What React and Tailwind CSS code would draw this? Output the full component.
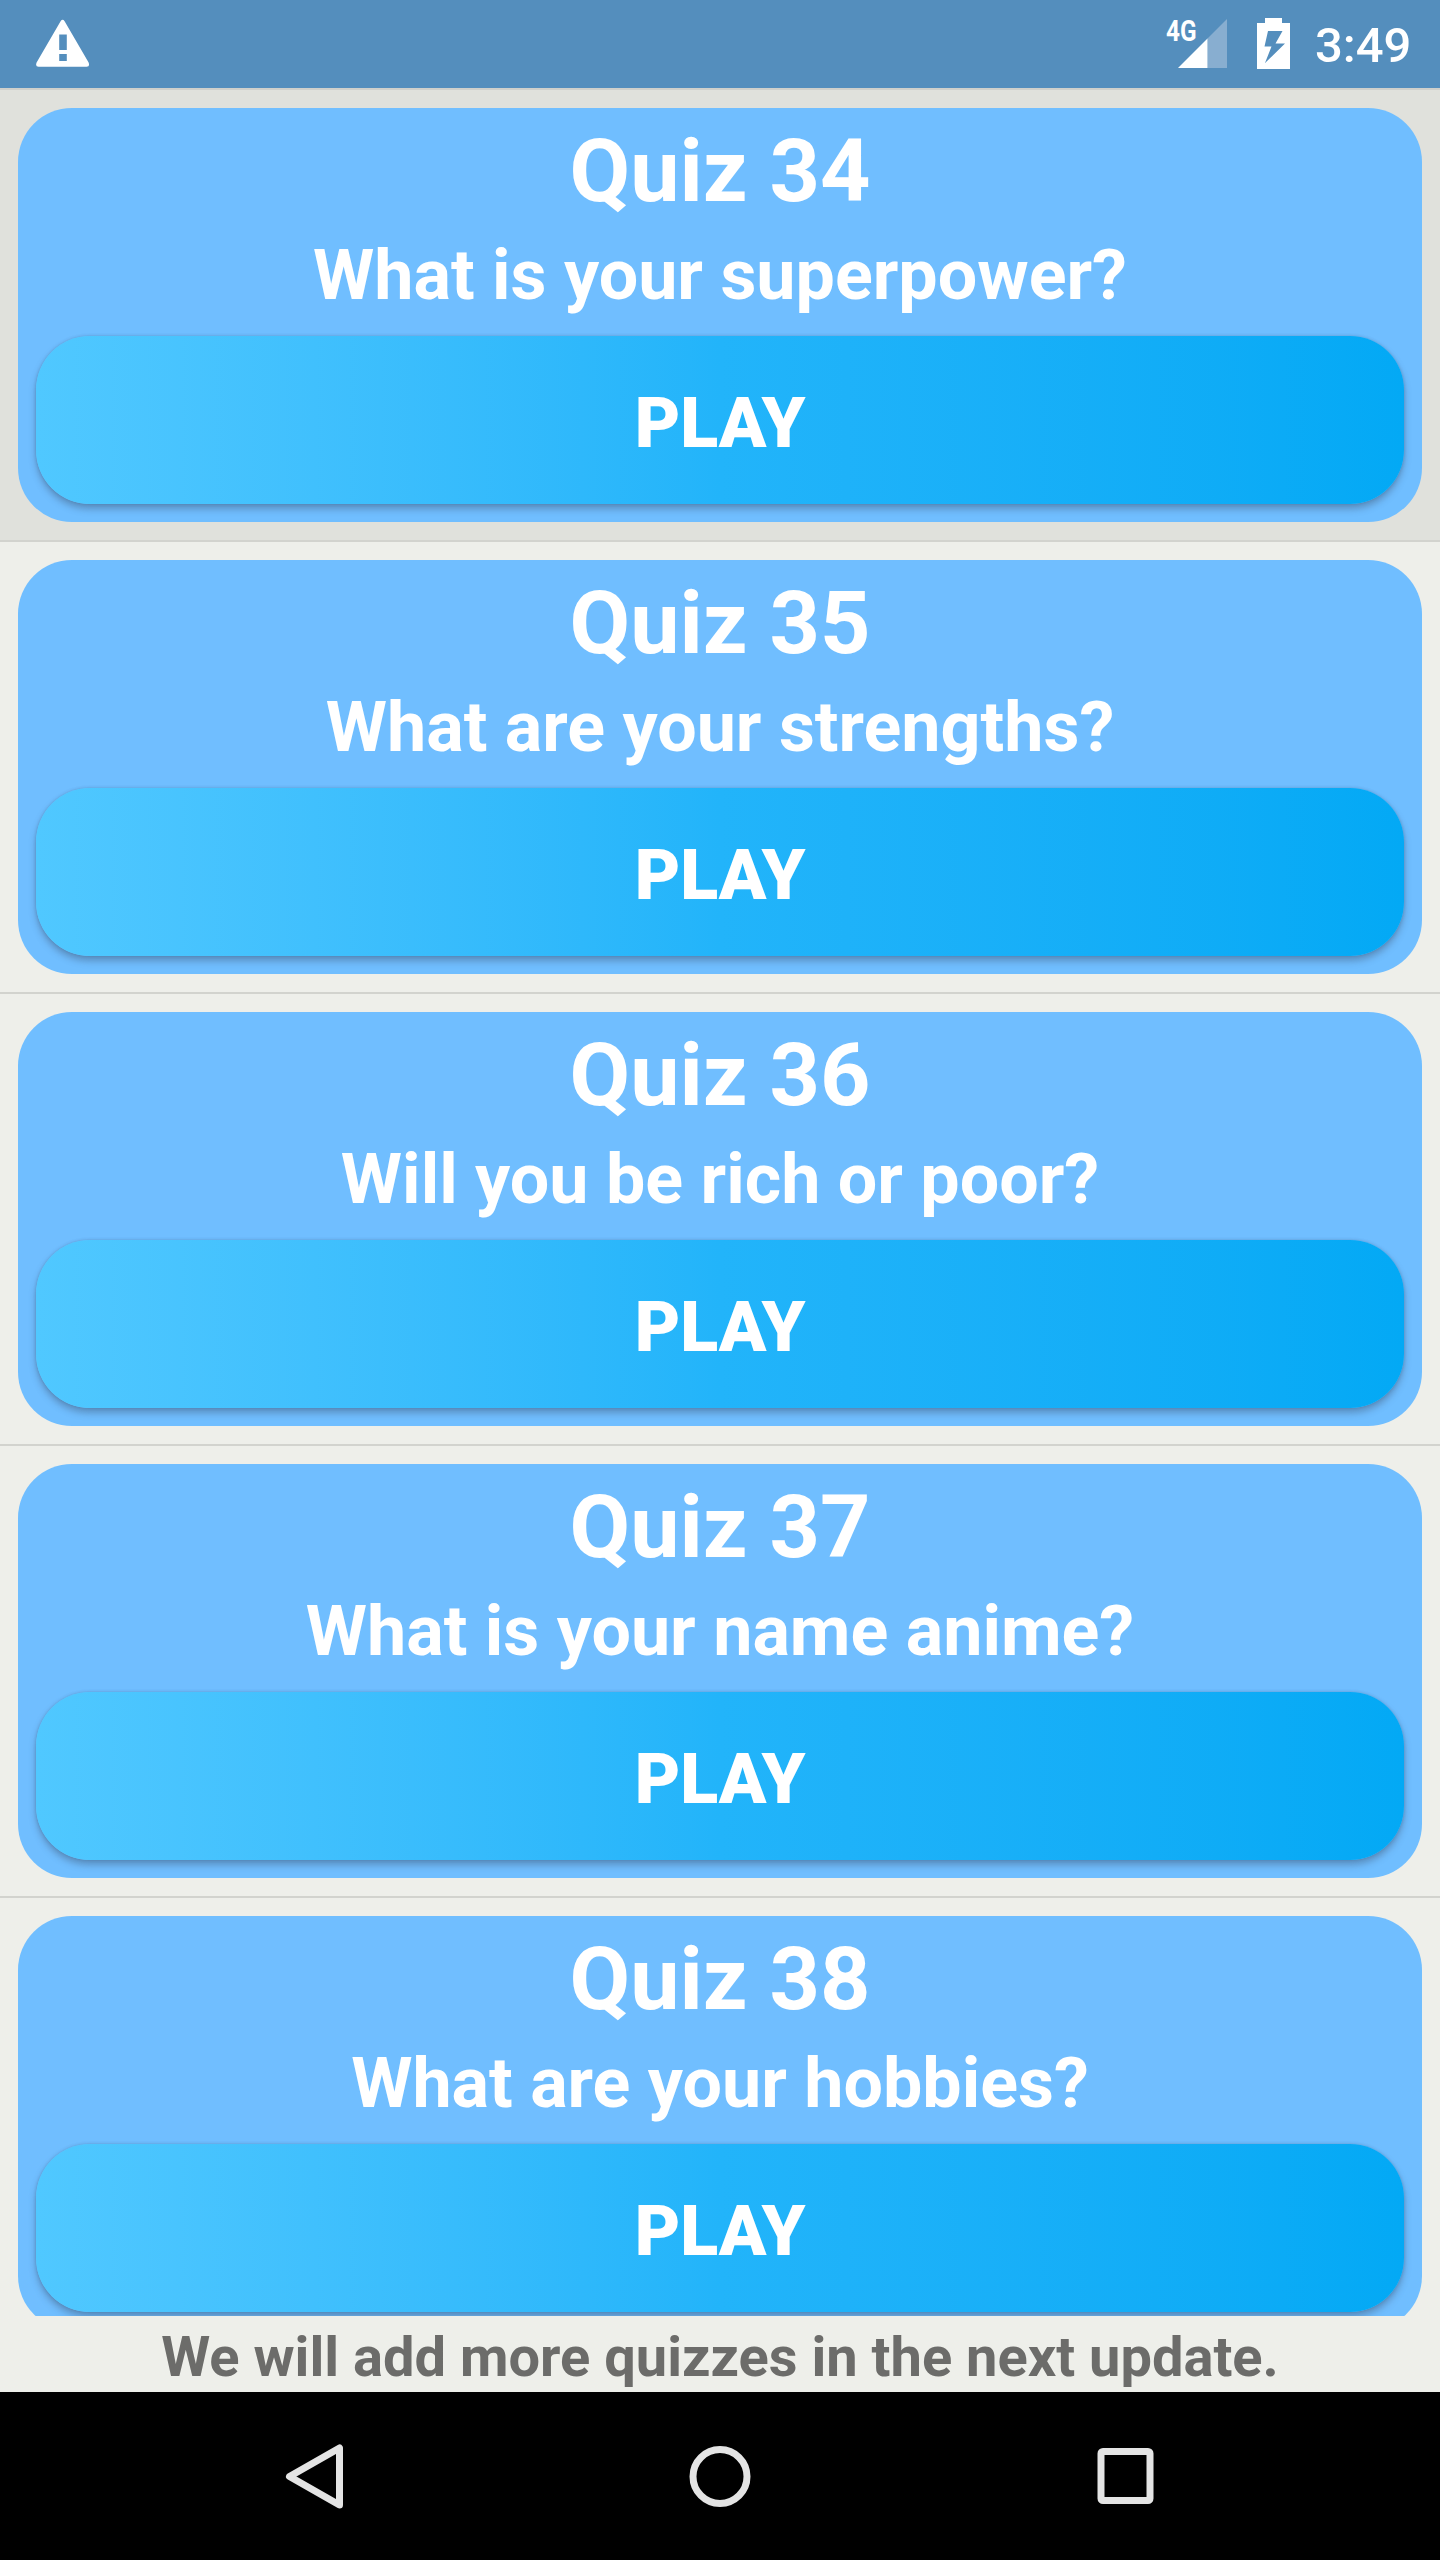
const quizzes = [
  { id: 34, question: "What is your superpower?", active: true },
  { id: 35, question: "What are your strengths?" },
  { id: 36, question: "Will you be rich or poor?" },
  { id: 37, question: "What is your name anime?" },
  { id: 38, question: "What are your hobbies?" },
];

function StatusBar() {
  return (
    <header className="flex h-[88px] shrink-0 items-start justify-between bg-[#548ebd] text-white">
      <svg className="mt-[19px] ml-[36px]" width="54" height="49" viewBox="0 0 54 49" fill="none">
        <path
          fill="currentColor"
          fillRule="evenodd"
          d="M24.6 2.3Q26.6-.6 28.6 2.3L52.6 43.6Q54.2 47.7 50.6 47.7H2.6Q-1 47.7.6 43.6ZM23.2 15.5V31H30.8V15.5ZM23.2 35V42H30.8V35Z"
        />
      </svg>
      <div className="flex items-start">
        <span className="mt-[15px] block w-[32px] origin-left scale-x-[0.84] text-[29px] leading-[32px] font-bold">4G</span>
        <svg className="mt-[19px] -ml-[20px]" width="49" height="49" viewBox="0 0 49 49">
          <path fill="#88aed0" d="M49 0V49H29.5V19.5Z" />
          <path fill="currentColor" d="M0 49L29.5 19.5V49Z" />
        </svg>
        <svg className="mt-[18px] ml-[30px]" width="33" height="51" viewBox="0 0 33 51">
          <path
            fill="currentColor"
            fillRule="evenodd"
            d="M8 0H25V5H33V51H0V5H8ZM11 13L7.5 28.5H14.5L8 45L28 25.5H18.5L25.5 13Z"
          />
        </svg>
        <div className="mt-[16px] mr-[28px] ml-[25px] w-[97px] text-[49px] leading-[60px] font-medium whitespace-nowrap">3:49</div>
      </div>
    </header>
  );
}

function QuizRow({ id, question, active }) {
  return (
    <li
      className={
        "h-[452px] shrink-0 border-t-2 p-[18px] " +
        (active ? "border-[#cfd0cc] bg-[#e0e1dc]" : "border-[#d2d3ce]")
      }
    >
      <article className="h-[414px] rounded-[54px] bg-[#70beff] px-[18px] text-center text-white">
        <h2 className="h-[126px] text-[88px] leading-[126px] font-bold">Quiz {id}</h2>
        <p className="h-[82px] text-[70px] leading-[82px] font-bold">{question}</p>
        <button className="mt-[20px] block h-[168px] w-full rounded-[54px] bg-linear-to-r from-[#50c8ff] via-[#22b4fa] to-[#03a9f5] pt-[6px] text-[70px] leading-[162px] font-black shadow-[0_5px_7px_rgba(60,80,110,0.42),0_0_3px_rgba(60,80,110,0.3)]">
          PLAY
        </button>
      </article>
    </li>
  );
}

function NavigationBar() {
  return (
    <nav className="flex h-[168px] shrink-0 bg-black text-[#e4e4e4]">
      <svg className="mt-[48px] ml-[284px]" width="62" height="72" viewBox="0 0 62 72" fill="none">
        <path d="M5.5 36.5L55.5 8V65Z" stroke="currentColor" strokeWidth="7" strokeLinejoin="round" />
      </svg>
      <svg className="mt-[52px] ml-[342px]" width="64" height="64" viewBox="0 0 64 64" fill="none">
        <circle cx="32" cy="32.5" r="27" stroke="currentColor" strokeWidth="7" />
      </svg>
      <svg className="mt-[52px] ml-[342px]" width="64" height="64" viewBox="0 0 64 64" fill="none">
        <rect x="7" y="7.5" width="49" height="49" rx="2" stroke="currentColor" strokeWidth="7" />
      </svg>
    </nav>
  );
}

export default function App() {
  return (
    <div className="flex h-[2560px] w-[1440px] flex-col overflow-hidden bg-[#eeefea] font-[Roboto,sans-serif]">
      <StatusBar />
      <ul className="flex h-[2228px] shrink-0 flex-col overflow-hidden">
        {quizzes.map((quiz) => (
          <QuizRow key={quiz.id} {...quiz} />
        ))}
      </ul>
      <p className="h-[76px] shrink-0 overflow-hidden text-center text-[56px] leading-[82px] font-bold text-[#6c6c6a]">
        We will add more quizzes in the next update.
      </p>
      <NavigationBar />
    </div>
  );
}
